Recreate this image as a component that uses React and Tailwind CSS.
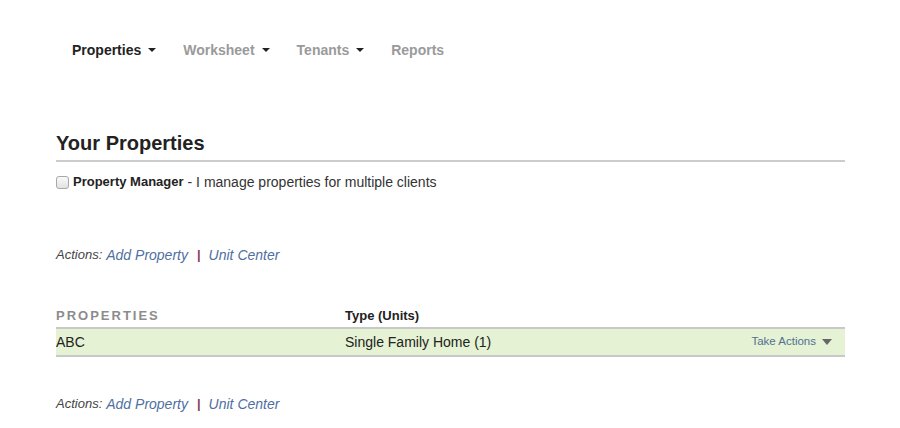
import React from 'react';

const font = { fontFamily: '"Liberation Sans", Arial, sans-serif' };

function Caret() {
  return <span className="ml-[7px] inline-block h-0 w-0 border-l-[4px] border-r-[4px] border-t-[4px] border-l-transparent border-r-transparent border-t-[#222]" />;
}

function NavItem({ label, active, caret = true }) {
  return (
    <div className={`flex items-center text-[14px] font-bold leading-[20px] ${active ? 'text-[#222]' : 'text-[#9a9a9a]'}`}>
      <span>{label}</span>
      {caret && <Caret />}
    </div>
  );
}

function Actions({ className = '' }) {
  return (
    <div className={`flex items-center italic leading-[16px] ${className}`}>
      <span className="text-[13px] text-[#444]">Actions:</span>
      <a className="ml-[4px] text-[14px] text-[#4f6fa0]">Add Property</a>
      <span className="ml-[9px] mr-[8px] text-[13px] not-italic font-bold text-[#8a3a5c]">|</span>
      <a className="text-[14px] text-[#4f6fa0]">Unit Center</a>
    </div>
  );
}

export default function App() {
  return (
    <div className="min-h-[428px] w-[900px] bg-white" style={font}>
      <div className="pl-[56px] pr-[55px]">
        {/* top nav */}
        <nav className="flex gap-[27px] pl-[16px] pt-[40px]">
          <NavItem label="Properties" active />
          <NavItem label="Worksheet" />
          <NavItem label="Tenants" />
          <NavItem label="Reports" caret={false} />
        </nav>

        {/* heading */}
        <h1 className="mt-[71px] border-b-2 border-[#cccccc] pb-[5px] text-[20px] font-bold leading-[24px] text-[#222]">
          Your Properties
        </h1>

        <label className="mt-[12px] flex items-center leading-[16px] text-[#222]">
          <span className="mr-[4px] inline-block h-[13px] w-[13px] rounded-[3px] border border-[#a8a8a8] bg-gradient-to-b from-[#fafafa] to-[#e2e2e2]" />
          <span className="text-[13px] font-bold">Property Manager</span>
          <span className="ml-[4px] text-[14px] text-[#333]">- I manage properties for multiple clients</span>
        </label>

        <Actions className="mt-[57px]" />

        {/* table */}
        <div className="mt-[42px]">
          <div className="flex h-[22px] items-center">
            <div className="w-[289px] text-[13px] font-bold tracking-[2px] text-[#8c8c8c]">PROPERTIES</div>
            <div className="text-[13px] font-bold text-[#222]">Type (Units)</div>
          </div>
          <div className="flex h-[30px] items-center border-y-2 border-[#c8c8c8] bg-[#e5f2d3] text-[14px] text-[#222]">
            <div className="w-[289px]">ABC</div>
            <div className="flex-1">Single Family Home (1)</div>
            <div className="flex items-center pr-[13px] text-[11.5px] text-[#536f93]">
              Take Actions
              <span className="ml-[6px] inline-block h-0 w-0 border-l-[5px] border-r-[5px] border-t-[6px] border-l-transparent border-r-transparent border-t-[#666]" />
            </div>
          </div>
        </div>

        <Actions className="mt-[39px]" />
      </div>
    </div>
  );
}
